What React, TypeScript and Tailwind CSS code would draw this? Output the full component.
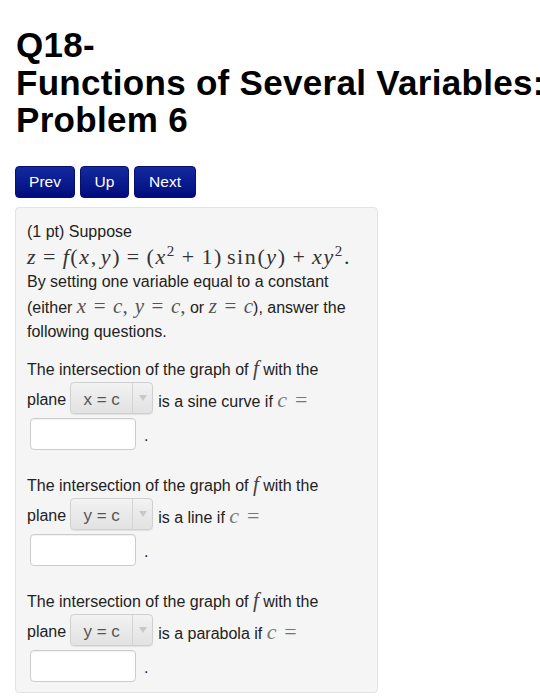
import React from 'react';

const mathFont = { fontFamily: '"Liberation Serif", "DejaVu Serif", serif' };

function V({ children }: { children: React.ReactNode }) {
  return <i className="italic">{children}</i>;
}

// relation / binary operator with TeX-like spacing
function Op({ c, wide }: { c: string; wide?: boolean }) {
  return <span className={`${wide ? 'mx-[0.36em]' : 'mx-[0.26em]'} not-italic`}>{c}</span>;
}

function Select({ label }: { label: string }) {
  return (
    <span className="inline-flex h-[32px] w-[83px] items-stretch overflow-hidden rounded-[4px] border border-[#d0d0d0] bg-gradient-to-b from-[#f2f2f2] to-[#e2e2e2] shadow-[0_1px_1px_rgba(0,0,0,0.08)] align-middle">
      <span className="flex flex-1 items-center justify-center pt-[4px] text-[17px] text-[#555]">{label}</span>
      <span className="flex w-[20px] items-center justify-center border-l border-[#d4d4d4]">
        <svg width="8" height="6" viewBox="0 0 8 6">
          <path d="M0 0 L8 0 L4 6 Z" fill="#c8c8c8" />
        </svg>
      </span>
    </span>
  );
}

function Question({ select, tail }: { select: string; tail: string }) {
  return (
    <div>
      <div className="h-[24px] leading-[24px]">
        The intersection of the graph of{' '}
        <span style={mathFont} className="text-[21px] italic text-[#444]">f</span> with the
      </div>
      <div className="flex h-[37px] items-center">
        <span className="pt-[3px]">plane</span>
        <span className="ml-[4px]"><Select label={select} /></span>
        <span className="ml-[5px] pt-[3px]">
          {tail}{' '}
          <span style={mathFont} className="text-[22px] text-[#777]">
            <i>c</i>
            <Op c="=" wide />
          </span>
        </span>
      </div>
      <div className="mt-[1px] flex h-[32px] items-center">
        <span className="ml-[3px] h-[32px] w-[106px] rounded-[4px] border border-[#cccccc] bg-white shadow-[inset_0_1px_1px_rgba(0,0,0,0.06)]" />
        <span className="ml-[8px] pt-[4px]">.</span>
      </div>
    </div>
  );
}

export default function App() {
  return (
    <div className="min-h-screen bg-white text-[#222]" style={{ fontFamily: '"Liberation Sans", Arial, sans-serif' }}>
      <h1 className="overflow-hidden whitespace-nowrap pl-[16px] pt-[26px] text-[35px] font-bold leading-[37.5px] tracking-[0.3px] text-black">
        Q18-<br />
        Functions of Several Variables:<br />
        Problem 6
      </h1>

      <div className="mt-[27px] flex gap-[5px] pl-[15px]">
        {[
          ['Prev', 'w-[60px]'],
          ['Up', 'w-[49px]'],
          ['Next', 'w-[62px]'],
        ].map(([t, w]) => (
          <button
            key={t}
            className={`${w} h-[32px] rounded-[4px] border border-[#07106a] bg-gradient-to-b from-[#1429a0] to-[#030c7c] text-[15.5px] text-white`}
          >
            {t}
          </button>
        ))}
      </div>

      <div className="ml-[15px] mt-[9px] w-[363px] rounded-[4px] border border-[#e3e3e3] bg-[#f5f5f5] pb-[10px] pl-[11px] pt-[12px] text-[16px]">
        <div className="leading-[24px]">(1 pt) Suppose</div>
        <div className="h-[26px] whitespace-nowrap text-[22px] leading-[26px] tracking-[1.6px] text-[#333]" style={mathFont}>
          <V>z</V>
          <Op c="=" />
          <V>f</V>(<V>x</V>,<span className="ml-[3px]" /><V>y</V>)
          <Op c="=" />
          (<V>x</V>
          <sup className="text-[15px]">2</sup>
          <Op c="+" />
          1)<span className="ml-[4px]" />sin(<V>y</V>)
          <Op c="+" />
          <V>xy</V>
          <sup className="text-[15px]">2</sup>.
        </div>
        <div className="leading-[24px]">
          By setting one variable equal to a constant
          <br />
          (either{' '}
          <span style={mathFont} className="text-[21px] text-[#555]">
            <i>x</i>
            <Op c="=" wide />
            <i>c</i>,<span className="ml-[7px]" /><i>y</i>
            <Op c="=" wide />
            <i>c</i>,
          </span>{' '}
          or{' '}
          <span style={mathFont} className="text-[21px] text-[#555]">
            <i>z</i>
            <Op c="=" wide />
            <i>c</i>
          </span>
          ), answer the
          <br />
          following questions.
        </div>

        <div className="mt-[12px] flex flex-col gap-[22px]">
          <Question select="x = c" tail="is a sine curve if" />
          <Question select="y = c" tail="is a line if" />
          <Question select="y = c" tail="is a parabola if" />
        </div>
      </div>
    </div>
  );
}
